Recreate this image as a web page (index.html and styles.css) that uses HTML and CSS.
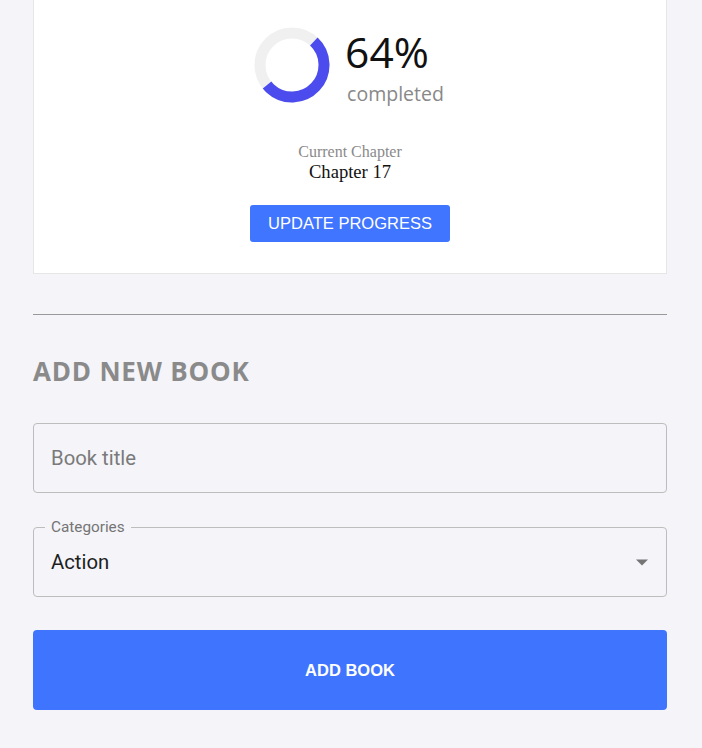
FILE: index.html
```html
<!DOCTYPE html>
<html>
<head>
<meta charset="utf-8">
<link rel="stylesheet" href="styles.css">
</head>
<body>
<main class="page">
  <section class="card">
    <div class="progress-row">
      <svg class="donut" width="76" height="76" viewBox="0 0 76 76">
        <circle cx="38" cy="38" r="32" fill="none" stroke="#f0f0f0" stroke-width="11"/>
        <circle cx="38" cy="38" r="32" fill="none" stroke="#4c4cee" stroke-width="11" stroke-dasharray="105 201" transform="rotate(-47 38 38)"/>
      </svg>
      <div class="progress-text">
        <div class="percent">64%</div>
        <div class="completed">completed</div>
      </div>
    </div>
    <div class="chapter-label">Current Chapter</div>
    <div class="chapter-value">Chapter 17</div>
    <button class="btn-update">UPDATE PROGRESS</button>
  </section>

  <hr class="divider">

  <h2 class="section-title">ADD NEW BOOK</h2>

  <div class="field">
    <input class="text-input" type="text" placeholder="Book title">
  </div>

  <fieldset class="select-field">
    <legend class="select-label">Categories</legend>
    <div class="select-value">
      <span>Action</span>
      <svg class="arrow" width="14" height="8" viewBox="0 0 14 8"><path d="M1 1.5h12L7 7.5z" fill="#757575"/></svg>
    </div>
  </fieldset>

  <button class="btn-add">ADD BOOK</button>
</main>
</body>
</html>
```

FILE: styles.css
```css
* { box-sizing: border-box; }
html, body { margin: 0; padding: 0; }
body {
  background: #f4f4f9;
  font-family: "Roboto", "Liberation Sans", sans-serif;
}
.page {
  padding: 0 35px 0 33px;
}
.card {
  background: #fff;
  border: 1px solid #e6e6e6;
  border-top: none;
  padding: 27px 0 31px;
  display: flex;
  flex-direction: column;
  align-items: center;
}
.progress-row {
  display: flex;
  align-items: flex-start;
  gap: 15px;
  margin-right: 2px;
}
.donut { display: block; }
.progress-text {
  display: flex;
  flex-direction: column;
}
.percent {
  font-family: "Open Sans", sans-serif;
  font-size: 42.5px;
  line-height: 48px;
  color: #111;
  margin-top: 1px;
}
.completed {
  font-family: "Open Sans", sans-serif;
  font-size: 19.5px;
  line-height: 24px;
  color: #888;
  margin-left: 2px;
  margin-top: 6px;
}
.chapter-label {
  font-family: "Liberation Serif", serif;
  font-size: 16px;
  line-height: 18px;
  color: #8a8a8a;
  margin-top: 37px;
}
.chapter-value {
  font-family: "Liberation Serif", serif;
  font-size: 18.6px;
  line-height: 22px;
  color: #111;
}
.btn-update {
  margin-top: 22px;
  width: 200px;
  height: 37px;
  border: none;
  border-radius: 3px;
  background: #3f75ff;
  color: #fff;
  font-family: "Liberation Sans", sans-serif;
  font-size: 16.5px;
  padding: 0;
}
.divider {
  border: none;
  border-top: 1px solid #999;
  margin: 40px 0 0;
}
.section-title {
  font-family: "Open Sans", sans-serif;
  font-weight: 700;
  font-size: 26px;
  line-height: 32px;
  letter-spacing: 0.8px;
  color: #8a8a8a;
  margin: 40px 0 0;
}
.field {
  margin-top: 36px;
}
.text-input {
  width: 100%;
  height: 70px;
  border: 1px solid #bdbdbd;
  border-radius: 4px;
  background: transparent;
  padding: 0 17px;
  font-family: "Roboto", sans-serif;
  font-size: 20.3px;
  color: #222;
  outline: none;
}
.text-input::placeholder { color: #7a7a7a; }
.select-field {
  margin: 27px 0 0;
  border: 1px solid #bdbdbd;
  border-radius: 4px;
  padding: 0 17px 0 17px;
  height: 77px;
  min-width: 0;
}
.select-label {
  font-family: "Roboto", sans-serif;
  font-size: 15.3px;
  color: #757575;
  padding: 0 6px;
  margin-left: -6px;
  line-height: 14px;
}
.select-value {
  display: flex;
  align-items: center;
  justify-content: space-between;
  height: 56px;
  margin-top: 0;
  font-family: "Roboto", sans-serif;
  font-size: 20.3px;
  color: #1e1e1e;
}
.arrow { margin-right: 0px; }
.btn-add {
  display: block;
  width: 100%;
  height: 80px;
  margin-top: 33px;
  border: none;
  border-radius: 4px;
  background: #3f74ff;
  color: #fff;
  font-family: "Liberation Sans", sans-serif;
  font-weight: 700;
  font-size: 16.5px;
}
```
